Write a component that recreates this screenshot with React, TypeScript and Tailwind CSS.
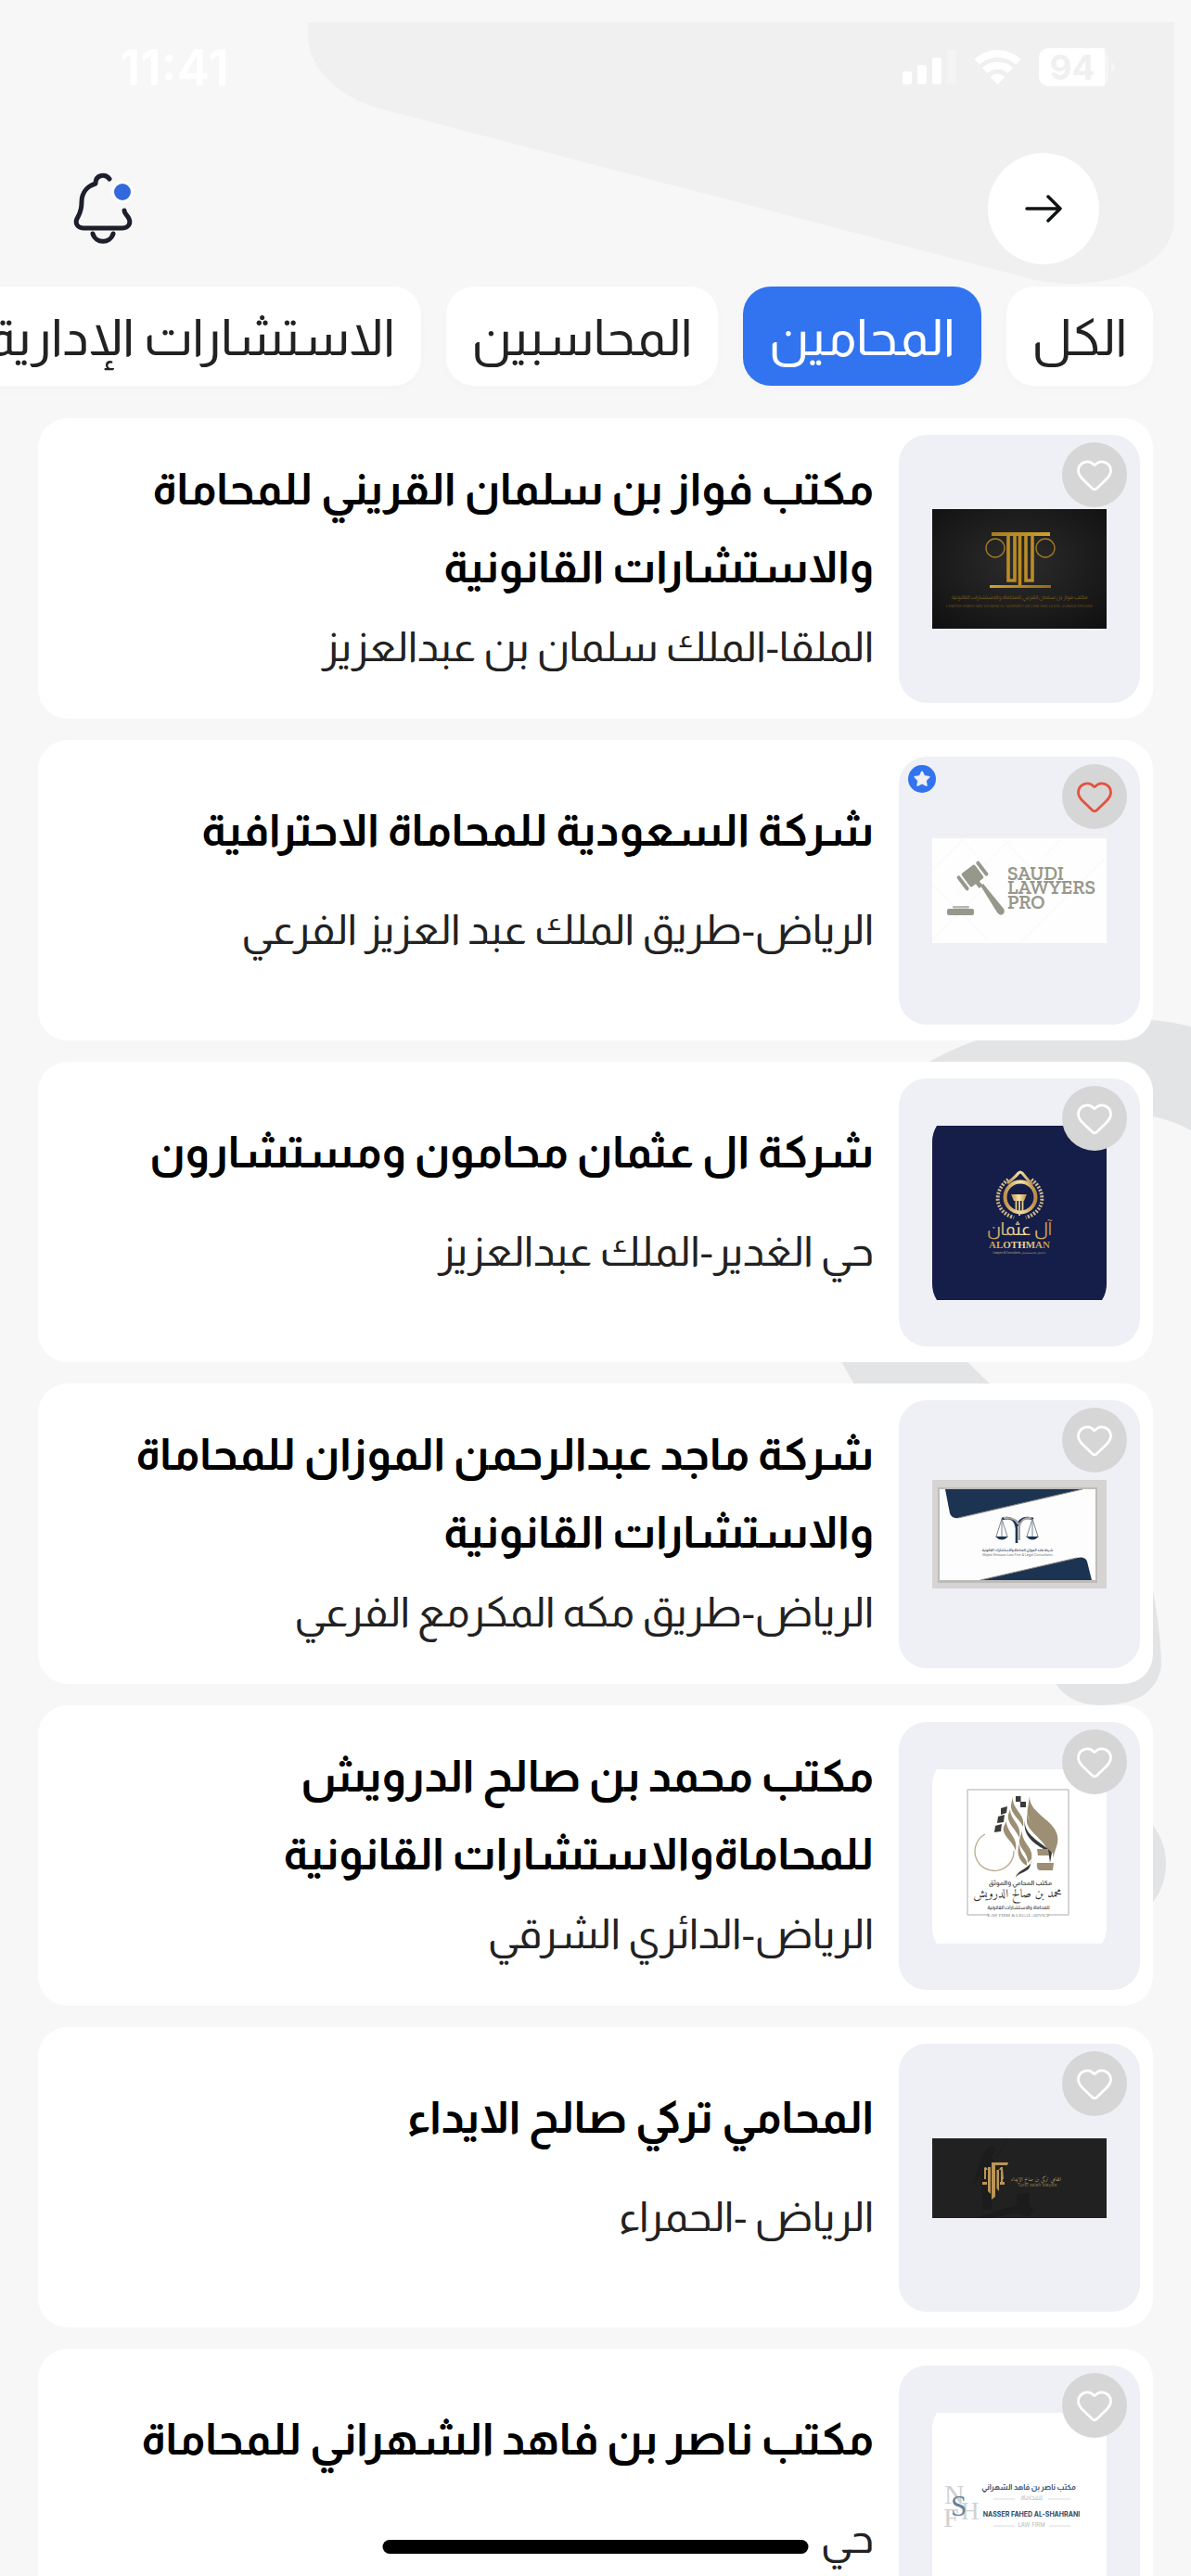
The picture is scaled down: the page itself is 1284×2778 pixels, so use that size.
import React from "react";
import { Heart, Star } from "lucide-react";

const FONT = "font-[Almarai,'Noto_Sans_Arabic','DejaVu_Sans',sans-serif]";
const ROUNDED = "M5 0H183Q188 8 188 17V171Q188 180 183 188H5Q0 180 0 171V17Q0 8 5 0Z";

function QariniLogo() {
  return (
    <svg viewBox="0 0 188 129" className="w-full" aria-hidden="true">
      <defs>
        <radialGradient id="qbg" cx="0.5" cy="0.45" r="0.75">
          <stop offset="0" stopColor="#2c2c2c" />
          <stop offset="1" stopColor="#0f0f0f" />
        </radialGradient>
        <linearGradient id="qgold" x1="0" x2="1" y1="0" y2="1">
          <stop offset="0" stopColor="#a87a1c" />
          <stop offset="0.5" stopColor="#cf9f30" />
          <stop offset="1" stopColor="#8f6618" />
        </linearGradient>
      </defs>
      <path d="M0 0H188V129H0Z" fill="url(#qbg)" />
      <path d="M64 25H127V29H64ZM62 82H128V85H62Z" fill="url(#qgold)" />
      <path d="M82 28V77H89V29M94.500 28V83M108 28V77H101V29" fill="none" stroke="#bb8b26" strokeWidth="3.600" />
      <circle cx="68" cy="42" r="10" fill="none" stroke="#a87c22" strokeWidth="1.300" />
      <circle cx="122" cy="42" r="10" fill="none" stroke="#a87c22" strokeWidth="1.300" />
      <text x="94" y="97" textAnchor="middle" fontSize="6" fill="#7a5c1c" direction="rtl">مكتب فواز بن سلمان القريني للمحاماة والاستشارات القانونية</text>
      <text x="94" y="106" textAnchor="middle" fontSize="4" fontFamily="Inter" fill="#6b5018" direction="ltr">LAWYER FAWAZ BIN SALMAN AL-QARAINI FOR LAW AND LEGAL CONSULTATIONS</text>
    </svg>
  );
}

function SaudiLawyersLogo() {
  return (
    <svg viewBox="0 0 188 113" className="w-full" aria-hidden="true">
      <path d="M0 0H188V113H0Z" fill="#fefefe" />
      <path d="M-10 45L45 -10M25 60L85 0M120 20L140 0M0 110L60 50M95 113L188 20M0 50L60 110M30 0L60 30M75 0L110 35" stroke="#f7f7f7" fill="none" />
      <g fill="#97988c">
        <g transform="translate(43.500 40.500) rotate(-37)">
          <rect x="-9" y="-9" width="18" height="18" rx="2" />
          <rect x="-15" y="-9.500" width="4" height="19" rx="2" />
          <rect x="11" y="-9.500" width="4" height="19" rx="2" />
          <rect x="-2.500" y="8" width="5" height="7" />
        </g>
        <path d="M52 51L55 49L77 76Q79 80 76 82Q73 84 70 80Z" />
        <rect x="16" y="76" width="29" height="7" rx="2" />
        <rect x="22" y="73" width="18" height="2.500" rx="1" opacity="0.700" />
        <g fontFamily="'Roboto Slab','Zilla Slab','Rokkitt','Arvo','Bitter','DejaVu Serif',serif" fontWeight="600" fontSize="21" direction="ltr">
          <text x="81" y="45">SAUDI</text>
          <text x="81" y="60">LAWYERS</text>
          <text x="81" y="76">PRO</text>
        </g>
      </g>
    </svg>
  );
}

function AlothmanLogo() {
  return (
    <svg viewBox="0 0 188 188" className="w-full" aria-hidden="true">
      <defs>
        <linearGradient id="ogold" x1="0" x2="1">
          <stop offset="0" stopColor="#c0924a" />
          <stop offset="0.500" stopColor="#f6e6a6" />
          <stop offset="1" stopColor="#bb8a42" />
        </linearGradient>
      </defs>
      <path d={ROUNDED} fill="#151d49" />
      <circle cx="95" cy="77" r="16.500" fill="none" stroke="url(#ogold)" strokeWidth="4" />
      <path d="M81 62Q90 55 93 51Q95 49 97 51Q102 57 108 64" fill="none" stroke="url(#ogold)" strokeWidth="3" />
      <path d="M85 74H102L99 81H88Z" fill="url(#ogold)" />
      <path d="M90.500 81V94M94 81V97M97.500 81V94" stroke="#e6cd88" strokeWidth="1.800" />
      <path d="M82 58C66 70 66 92 88 99M107 58C123 70 123 92 101 99" fill="none" stroke="#cdbb8c" strokeWidth="4" strokeDasharray="2 1.500" />
      <text x="94" y="118" textAnchor="middle" fontSize="19" fontWeight="400" fill="url(#ogold)" direction="rtl">آل عثمان</text>
      <text x="94" y="132" textAnchor="middle" fontSize="11" fontWeight="700" fontFamily="'Liberation Serif',serif" fill="url(#ogold)" direction="ltr">ALOTHMAN</text>
      <text x="94" y="138" textAnchor="middle" fontSize="3" fill="#b8a987" direction="rtl">محامون ومستشارون Lawyers &amp; Consultants</text>
    </svg>
  );
}

function MozanLogo() {
  return (
    <svg viewBox="0 0 188 117" className="w-full" aria-hidden="true">
      <path d="M0 0H188V117H0Z" fill="#d5d4d2" />
      <path d="M6 8H178V111H6Z" fill="#bdbcb9" />
      <path d="M8 10H176V108H8Z" fill="#fdfdfd" />
      <path d="M14 10H162L28 41Q21 42 19 36Z" fill="#1d3352" />
      <path d="M52 108L156 84Q165 82 167 88L172 108Z" fill="#1d3352" />
      <path d="M162 10L28 41M52 108L156 84" stroke="#8f8b85" strokeWidth="1.200" />
      <path d="M75 42Q89 38 91 52V68M109 42Q95 38 92 50" fill="none" stroke="#1d3352" strokeWidth="2.600" />
      <path d="M77 41Q92 40 94 50V65M107 41Q96 40 94 50" fill="none" stroke="#a5a4a2" strokeWidth="2" />
      <path d="M75 42L69 61M75 42V62M75 42L81 61M108 42L102 61M108 42V62M108 42L114 61" stroke="#7e8794" />
      <path d="M68 61H82Q75 68 68 61ZM101 61H115Q108 68 101 61Z" fill="#1d3352" />
      <text x="92" y="77" textAnchor="middle" fontSize="3.500" fontWeight="700" fill="#1d3352" direction="rtl">شركة ماجد الموزان للمحاماة والاستشارات القانونية</text>
      <text x="92" y="82" textAnchor="middle" fontSize="3.500" fontFamily="Inter" fill="#6b6f76" direction="ltr">Majed Almozan Law Firm &amp; Legal Consultants</text>
    </svg>
  );
}

function DarwishLogo() {
  return (
    <svg viewBox="0 0 188 188" className="w-full" aria-hidden="true">
      <path d={ROUNDED} fill="#fff" />
      <path d="M62 157H38V22H147V157H125" fill="none" stroke="#adadad" />
      <path d="M57 70A21 21 0 1 0 88 88" fill="none" stroke="#b9aa8c" strokeWidth="1.300" />
      <g fill="#9c8f74">
        <path d="M87 30C86 44 101 48 98 62C93 52 84 48 85 38Z" />
        <path d="M84 43C84 55 97 59 94 74C90 64 80 58 82 49Z" />
        <path d="M80 56C80 68 93 73 90 88C87 77 75 72 77 62Z" />
        <path d="M105 29C104 50 140 56 135 80L130 96C134 74 98 62 103 42Z" />
        <path d="M102 46C102 62 134 72 130 90L124 88C122 76 100 66 102 54Z" />
        <path d="M97 66C96 80 110 84 107 97L103 101C104 90 92 84 94 76Z" />
        <path d="M94 80C94 94 104 96 102 104C94 100 90 90 94 80Z" />
        <path d="M113 86H130L128 93H114ZM113 101H131L130 109H116Q112 108 113 101Z" />
      </g>
      <g fill="#3a3a39">
        <path d="M90 29H95.500V35H90ZM95 35H101V41H95ZM74 42L81 40L80 47L74 49ZM71 51L78 49L77 57L70 58ZM68 61L75 59L74 67L67 68Z" />
        <path d="M100 54C98 68 112 76 125 86H120C110 80 97 72 100 54Z" />
        <path d="M108 98C104 108 92 108 90 117C94 110 106 112 106 101Z" />
        <path d="M125 86L129 90L127 101Z" />
      </g>
      <text x="95" y="125" textAnchor="middle" fontSize="7" fontWeight="700" fill="#4a4a4a" direction="rtl">مكتب المحامي والموثق</text>
      <text x="92" y="138" textAnchor="middle" fontSize="13" fontFamily="Amiri,'DejaVu Sans'" fill="#333" direction="rtl">محمد بن صالح الدرويش</text>
      <text x="93" y="151" textAnchor="middle" fontSize="5" fontWeight="700" fill="#4a4a4a" direction="rtl">للمحاماة والاستشارات القانونية</text>
      <text x="93" y="159" textAnchor="middle" fontSize="5" fontFamily="'Liberation Serif',serif" fill="#777" direction="ltr">LAW FIRM &amp; LEGAL ADVICE</text>
    </svg>
  );
}

function TurkiLogo() {
  return (
    <svg viewBox="0 0 188 86" className="w-full" aria-hidden="true">
      <path d="M0 0H188V86H0Z" fill="#212121" />
      <path d="M62 8a5 5 0 1 1 1 10l5 12-5 46h-8l-2-38-9 12 10-30ZM68 22L82 0M48 86L92 72V60h12v12l6 6-6 6-14-4-30 6Z" fill="#1c1c1c" stroke="#1c1c1c" />
      <g fill="#bb9457">
        <path d="M64 26H82L81 29H68V63L64 66Z" />
        <path d="M60 31H63V60L60 57ZM69.500 34H72V57L69.500 54ZM74 31H76V48L74 50Z" />
        <path d="M56 32Q58 29 60 34H58V44H56ZM76 32Q74 29 72 34H74V44H77ZM54 47H59V50H54ZM73 47H78V50H73Z" />
      </g>
      <text x="112" y="46" textAnchor="middle" fontSize="6" fontFamily="Amiri,'DejaVu Sans'" fill="#c9ad78" direction="rtl">المحامي تركي بن صالح الايداء</text>
      <text x="113" y="52" textAnchor="middle" fontSize="5" fontFamily="Inter" fill="#8a6d40" direction="ltr">Turki saleh aleyda</text>
    </svg>
  );
}

function ShahraniLogo() {
  return (
    <svg viewBox="0 0 188 188" className="w-full" aria-hidden="true">
      <path d={ROUNDED} fill="#fff" />
      <g fontFamily="'Liberation Serif',serif" direction="ltr">
        <g fill="#cfd1d2" fontSize="30">
          <text x="13" y="98">N</text>
          <text x="31" y="115" fontSize="27">H</text>
          <text x="12" y="123">F</text>
        </g>
        <text x="20" y="111" fontSize="31" fill="#64819a">S</text>
      </g>
      <text x="104" y="83" textAnchor="middle" fontSize="8" fontWeight="700" fill="#2c4a68" direction="rtl">مكتب ناصر بن فاهد الشهراني</text>
      <text x="107" y="94" textAnchor="middle" fontSize="7" fill="#b5b8ba" direction="rtl">للمحاماة</text>
      <text x="107" y="112" textAnchor="middle" fontSize="7" fontWeight="700" fontFamily="Inter" fill="#2c4a68" direction="ltr">NASSER FAHED AL-SHAHRANI</text>
      <text x="107" y="123" textAnchor="middle" fontSize="6" fontFamily="Inter" fill="#b5b8ba" direction="ltr">LAW FIRM</text>
      <path d="M66 93H89M125 93H149M66 122H89M126 122H149" stroke="#d9dbdc" />
    </svg>
  );
}

type Office = {
  title: string;
  address: string;
  Logo: () => React.JSX.Element;
  liked?: boolean;
  featured?: boolean;
  long?: boolean;
};

const offices: Office[] = [
  { title: "مكتب فواز بن سلمان القريني للمحاماة والاستشارات القانونية", address: "الملقا-الملك سلمان بن عبدالعزيز", Logo: QariniLogo, long: true },
  { title: "شركة السعودية للمحاماة الاحترافية", address: "الرياض-طريق الملك عبد العزيز الفرعي", Logo: SaudiLawyersLogo, liked: true, featured: true },
  { title: "شركة ال عثمان محامون ومستشارون", address: "حي الغدير-الملك عبدالعزيز", Logo: AlothmanLogo },
  { title: "شركة ماجد عبدالرحمن الموزان للمحاماة والاستشارات القانونية", address: "الرياض-طريق مكه المكرمع الفرعي", Logo: MozanLogo, long: true },
  { title: "مكتب محمد بن صالح الدرويش للمحاماةوالاستشارات القانونية", address: "الرياض-الدائري الشرقي", Logo: DarwishLogo, long: true },
  { title: "المحامي تركي صالح الايداء", address: "الرياض -الحمراء", Logo: TurkiLogo },
  { title: "مكتب ناصر بن فاهد الشهراني للمحاماة", address: "حي", Logo: ShahraniLogo },
];

const categories = ["الكل", "المحامين", "المحاسبين", "الاستشارات الإدارية"];

function OfficeCard({ title, address, Logo, liked, featured, long }: Office) {
  return (
    <li className="flex h-[324px] shrink-0 gap-[27px] rounded-[32px] bg-white pt-[18px] pr-[14px] pl-10">
      <div className="relative flex h-[289px] w-[260px] shrink-0 items-center justify-center rounded-[30px] bg-[#eff0f5]">
        <div className="w-[188px]">
          <Logo />
        </div>
        <button
          type="button"
          aria-label="إضافة إلى المفضلة"
          aria-pressed={!!liked}
          className={`absolute top-2 right-[14px] flex size-[70px] items-center justify-center rounded-full bg-[#d6d6d6] ${liked ? "text-[#e4523f]" : "text-white"}`}
        >
          <Heart size={42} strokeWidth={1.6} />
        </button>
        {featured && (
          <span className="absolute top-[9px] left-[10px] flex size-[30px] items-center justify-center rounded-full bg-[#3273f0] text-[#eff0f5]">
            <Star size={20} fill="currentColor" strokeWidth={1} />
          </span>
        )}
      </div>
      <div className={`flex min-w-0 flex-1 flex-col ${long ? "pt-[17px]" : "gap-[21px] pt-[38px]"}`}>
        <h2 className="text-[48px] leading-[84px] font-bold text-black">{title}</h2>
        <p className="text-[45px] leading-[86px] font-normal text-[#222]">{address}</p>
      </div>
    </li>
  );
}

export default function App() {
  return (
    <div dir="rtl" className={`relative flex h-screen flex-col overflow-hidden bg-[#f7f7f7] ${FONT}`}>
      <svg viewBox="0 0 1284 2778" className="absolute inset-x-0 top-0 w-full" aria-hidden="true">
        <path d="M332 24H1266V240C1262 280 1215 306 1155 306Q1125 306 1097 297L409 117C365 105 332 72 332 40Z" fill="#f0f0f0" />
        <g fill="#e3e4e6">
          <path d="M972 1165C1060 1097 1200 1087 1284 1107V1219Q1250 1200 1200 1200H1000Z" />
          <path d="M900 1456H1030L1075 1500H925Z" />
          <path d="M1243 1715Q1252 1765 1252 1797Q1245 1839 1185 1839Q1150 1838 1136 1812V1700Z" />
          <ellipse cx="1205" cy="2010" rx="52" ry="60" />
        </g>
      </svg>

      <div dir="ltr" className="relative flex h-[165px] shrink-0 items-start justify-between pt-[40px] pr-[64px] pl-[129px] font-[Inter,sans-serif] text-white">
        <span className="pt-[3px] text-[53px] leading-[60px] font-semibold">11:41</span>
        <svg viewBox="0 0 260 70" className="h-[70px] w-[260px]" aria-hidden="true">
          <g fill="#fff">
            <rect x="13" y="37" width="10" height="14" rx="3" />
            <rect x="29" y="30" width="10" height="21" rx="3" />
            <rect x="45" y="22" width="10" height="29" rx="3" />
            <rect x="61" y="14" width="10" height="37" rx="3" fill="#f4f4f4" />
            <path d="M115.500 51L107.500 43Q115.500 36.500 123.500 43Z" />
          </g>
          <path d="M93.100 26.600A33.500 33.500 0 0 1 137.900 26.600M101.600 36A20.800 20.800 0 0 1 129.400 36" fill="none" stroke="#fff" strokeWidth="8" />
          <rect x="160" y="12" width="75" height="41" rx="12" fill="#f6f6f6" />
          <path d="M172 12H231V53H172Q160 53 160 41V24Q160 12 172 12Z" fill="#fff" />
          <path d="M238 27Q242 28 242 32.500Q242 37 238 38Z" fill="#f6f6f6" />
          <text x="196" y="46" textAnchor="middle" fontSize="37" fontWeight="700" fill="#f0f0f0">94</text>
        </svg>
      </div>

      <header className="relative flex h-[144px] shrink-0 items-start justify-between pr-[99px] pl-[60px]">
        <button type="button" aria-label="رجوع" className="flex size-[120px] items-center justify-center rounded-full bg-white">
          <svg viewBox="0 0 40 30" className="h-[30px] w-[40px]" fill="none" stroke="#111414" strokeWidth="3.500" strokeLinecap="round" strokeLinejoin="round" aria-hidden="true">
            <path d="M2 15H38M25 2L38 15L25 28" />
          </svg>
        </button>
        <button type="button" aria-label="الإشعارات" className="mt-[5px]">
          <svg viewBox="0 0 110 110" className="size-[110px]" fill="none" stroke="#1c202b" strokeWidth="5" strokeLinecap="round" strokeLinejoin="round" aria-hidden="true">
            <path d="M58 23C54 17 43 18 43 28C33 31 28 39 28 48C28 57 26 60 24 64C20 70 23 76 30 76H72C79 76 82 70 78 64C76 61 74 60 74 57" />
            <path d="M40 82C43 93 59 93 62 82" />
            <circle cx="72" cy="37" r="10.500" fill="#3269df" stroke="#fff" strokeWidth="3" />
          </svg>
        </button>
      </header>

      <nav className="relative flex shrink-0 gap-[27px] pr-[41px]">
        {categories.map((name, i) => (
          <button
            key={name}
            type="button"
            aria-pressed={i === 1}
            className={`h-[107px] shrink-0 rounded-[30px] px-7 pt-1 text-[55px] leading-[103px] font-normal whitespace-nowrap shadow-[0_4px_14px_rgba(0,0,0,0.015)] ${i === 1 ? "bg-[#3273f0] text-white" : "bg-white text-[#222]"}`}
          >
            {name}
          </button>
        ))}
      </nav>

      <ul className="relative mt-[35px] flex min-h-0 flex-1 flex-col gap-[23px] overflow-hidden px-[41px]">
        {offices.map((office) => (
          <OfficeCard key={office.title} {...office} />
        ))}
      </ul>

      <div className="absolute bottom-6 left-1/2 h-[15px] w-[459px] -translate-x-1/2 rounded-full bg-black" />
    </div>
  );
}
